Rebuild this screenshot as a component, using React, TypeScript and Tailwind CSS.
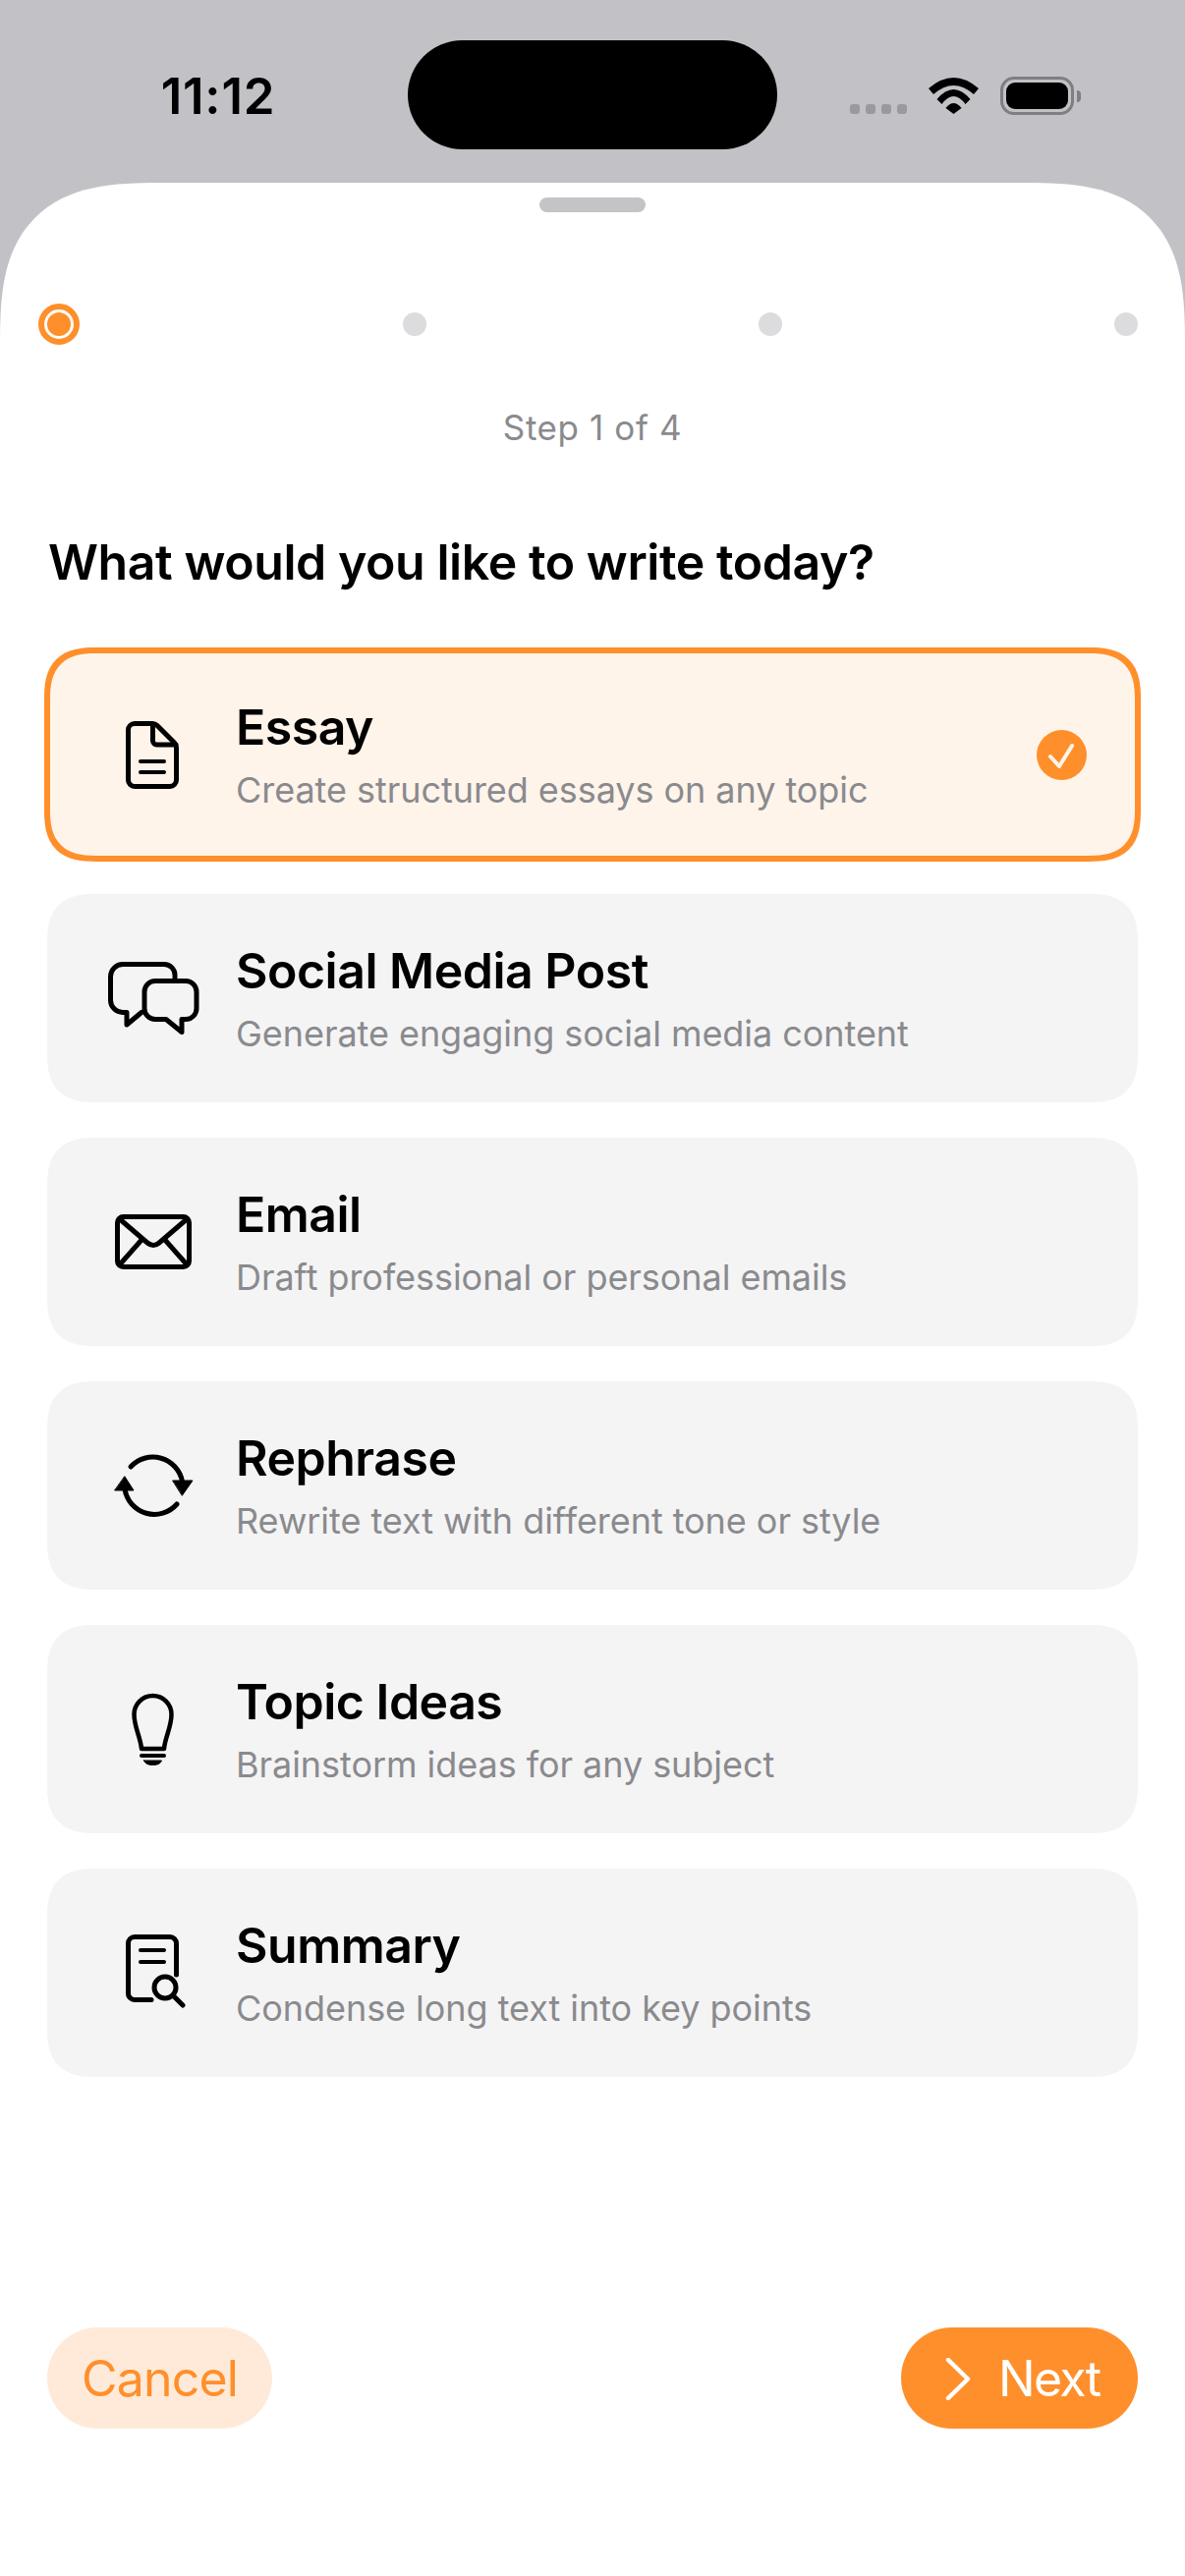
import type { ReactNode } from 'react'

const font = "[font-family:Inter,'Noto_Sans',sans-serif]"

function Icon({ children }: { children: ReactNode }) {
  return (
    <svg
      viewBox="0 0 100 100"
      fill="none"
      stroke="currentColor"
      strokeWidth={5}
      strokeLinecap="round"
      strokeLinejoin="round"
      className="h-[100px] w-[100px] shrink-0 text-black"
    >
      {children}
    </svg>
  )
}

const EssayIcon = () => (
  <Icon>
    <path d="M32 18.5H50Q53 18.5 55 20.5L72.5 38Q74.5 40 74.5 43V76a6.5 6.5 0 0 1-6.5 6.5H32a6.5 6.5 0 0 1-6.5-6.5V25a6.5 6.5 0 0 1 6.5-6.5Z" />
    <path d="M50.5 19V36a4 4 0 0 0 4 4H74" />
    <path d="M38 57H62M38 68H62" strokeWidth={4} />
  </Icon>
)

const SocialIcon = () => (
  <Icon>
    <path d="M73 29V27a11 11 0 0 0-11-11.5H20a12.5 12.5 0 0 0-12.5 12.5V52a12.5 12.5 0 0 0 12.5 12.5H24V77L39 64.5" />
    <path d="M53 32.5H84a11 11 0 0 1 11 11V60a11 11 0 0 1-11 11.5H80V84.5L64 71.5H53a11 11 0 0 1-11-11V43.5a11 11 0 0 1 11-11Z" />
  </Icon>
)

const EmailIcon = () => (
  <Icon>
    <rect x="14.5" y="24.5" width="73" height="51" rx="6" />
    <path d="M17 27L45 51Q51 56 57 51L85 27" />
    <path d="M40 47L17 73M62 47L85 73" />
  </Icon>
)

const RephraseIcon = () => (
  <Icon>
    <path d="M28 31A30.5 30.5 0 0 1 80.5 46" />
    <path d="M75 69A30.5 30.5 0 0 1 22 54" />
    <path d="M71 45H91L80.5 60Z" fill="currentColor" strokeWidth={1} />
    <path d="M12 55H31L22 41Z" fill="currentColor" strokeWidth={1} />
  </Icon>
)

const BulbIcon = () => (
  <Icon>
    <path d="M39 70C38 58 31.5 48 31.5 35A19 19 0 0 1 69.5 35C69.5 48 63 58 62 70H39Z" strokeWidth={4.5} />
    <path d="M39 77H62" strokeWidth={4} />
    <path d="M41.5 82H59.5Q58 86.5 50.5 86.5Q43 86.5 41.5 82Z" fill="currentColor" strokeWidth={1} />
  </Icon>
)

const SummaryIcon = () => (
  <Icon>
    <path d="M74.5 52V20a6.5 6.5 0 0 0-6.5-6.5H32a6.5 6.5 0 0 0-6.5 6.5V71a6.5 6.5 0 0 0 6.5 6.5H49" />
    <path d="M38 27H62M38 39H62" strokeWidth={4} />
    <circle cx="63" cy="65" r="11" />
    <path d="M71 73L81 83" />
  </Icon>
)

const options = [
  { title: 'Essay', desc: 'Create structured essays on any topic', icon: <EssayIcon />, selected: true },
  { title: 'Social Media Post', desc: 'Generate engaging social media content', icon: <SocialIcon /> },
  { title: 'Email', desc: 'Draft professional or personal emails', icon: <EmailIcon /> },
  { title: 'Rephrase', desc: 'Rewrite text with different tone or style', icon: <RephraseIcon /> },
  { title: 'Topic Ideas', desc: 'Brainstorm ideas for any subject', icon: <BulbIcon /> },
  { title: 'Summary', desc: 'Condense long text into key points', icon: <SummaryIcon /> },
]

function StatusBar() {
  return (
    <div className="flex h-[186px] items-start">
      <div className="flex w-[415px] justify-center pt-[68px] pl-[29px]">
        <span className="text-[51px] leading-[60px] font-semibold tracking-[0.8px] text-black">11:12</span>
      </div>
      <div className="mt-[41px] h-[111px] w-[376px] rounded-[56px] bg-black" />
      <div className="flex items-end pt-[78px] pl-[74px]">
        <div className="mb-px flex gap-[6px]">
          <div className="h-[10px] w-[10px] rounded-[3px] bg-[#9a9a9d]" />
          <div className="h-[10px] w-[10px] rounded-[3px] bg-[#9a9a9d]" />
          <div className="h-[10px] w-[10px] rounded-[3px] bg-[#9a9a9d]" />
          <div className="h-[10px] w-[10px] rounded-[3px] bg-[#9a9a9d]" />
        </div>
        <svg viewBox="0 0 51 37" className="mb-px ml-[22px] h-[37px] w-[51px] fill-black">
          <path d="M0 11Q25.5 -11 51 11L46 17Q25.5 -1 5 17Z" />
          <path d="M8.5 22Q25.5 2 42.5 22L37.5 27Q25.5 11 13.5 27Z" />
          <path d="M17.5 31Q25.5 21 33.5 31L25.5 37Z" />
        </svg>
        <div className="ml-[22px] flex items-center">
          <div className="h-[39px] w-[75px] rounded-[14px] border-[3px] border-[#7f7f82] p-[3px]">
            <div className="h-full w-full rounded-[9px] bg-black" />
          </div>
          <div className="ml-[3px] h-[12px] w-[4px] rounded-r-full bg-[#7f7f82]" />
        </div>
      </div>
    </div>
  )
}

function Steps() {
  return (
    <div className="mt-[93px] flex justify-between px-[39px]">
      <div className="flex h-[42px] w-[42px] items-center justify-center rounded-full border-[6px] border-[#ff8f2b] bg-white p-[3px]">
        <div className="h-full w-full rounded-full bg-[#ff8f2b]" />
      </div>
      {[0, 1, 2].map((i) => (
        <div key={i} className="flex h-[42px] w-[42px] items-center justify-center">
          <div className="h-[24px] w-[24px] rounded-full bg-[#dcdcde]" />
        </div>
      ))}
    </div>
  )
}

export default function App() {
  return (
    <div className={`flex h-[2622px] w-[1206px] flex-col overflow-hidden bg-[#c2c1c6] ${font}`}>
      <StatusBar />
      <div className="flex flex-1 flex-col rounded-t-[164px] bg-white [corner-shape:superellipse(1.5)]">
        <div className="mx-auto mt-[15px] h-[15px] w-[108px] rounded-full bg-[#c4c4c6]" />
        <Steps />
        <p className="mt-[60px] text-center text-[35px] leading-[48px] tracking-[0.6px] text-[#8a8a8e]">Step 1 of 4</p>
        <h1 className="mt-[83px] pl-[49px] text-[50px] leading-[60px] font-semibold tracking-[-0.43px] text-black">
          What would you like to write today?
        </h1>

        <div className="mt-[60px] flex flex-col gap-[36px] px-[48px]">
          {options.map((o) => (
            <div
              key={o.title}
              className={`flex h-[212px] items-center rounded-[50px] pr-[52px] pl-[57px] [corner-shape:superellipse(1.4)] ${
                o.selected ? 'bg-[#fff4ea] outline-[6px] -outline-offset-3 outline-[#ff8f2b]' : 'bg-[#f4f4f4]'
              }`}
            >
              {o.icon}
              <div className="ml-[35px] flex-1 pt-[2px]">
                <p className="text-[50px] leading-[60px] font-semibold tracking-[-0.5px] text-black">{o.title}</p>
                <p className="mt-[10px] text-[36px] leading-[48px] tracking-[-0.05px] text-[#8a8a8e]">{o.desc}</p>
              </div>
              {o.selected && (
                <div className="flex h-[51px] w-[51px] items-center justify-center rounded-full bg-[#ff8f2b]">
                  <svg viewBox="0 0 51 51" fill="none" className="h-[51px] w-[51px]">
                    <path d="M14 27L23 37L36 16" stroke="#fff4ea" strokeWidth={4} strokeLinecap="round" strokeLinejoin="round" />
                  </svg>
                </div>
              )}
            </div>
          ))}
        </div>

        <div className="mt-[255px] flex justify-between px-[48px]">
          <button className="h-[103px] w-[229px] rounded-[52px] bg-[#ffead9] pt-[2px] text-[50px] tracking-[-0.8px] text-[#ff8f2b]">Cancel</button>
          <button className="flex h-[103px] w-[241px] items-center rounded-[52px] bg-[#ff8f2b] pt-[2px] pl-[44px] text-[50px] tracking-[-1.7px] text-white">
            <svg viewBox="0 0 27 43" fill="none" className="h-[43px] w-[27px]">
              <path d="M4 2L24 21.5L4 41" stroke="white" strokeWidth={4.5} strokeLinecap="round" strokeLinejoin="round" />
            </svg>
            <span className="ml-[28px]">Next</span>
          </button>
        </div>
      </div>
    </div>
  )
}
